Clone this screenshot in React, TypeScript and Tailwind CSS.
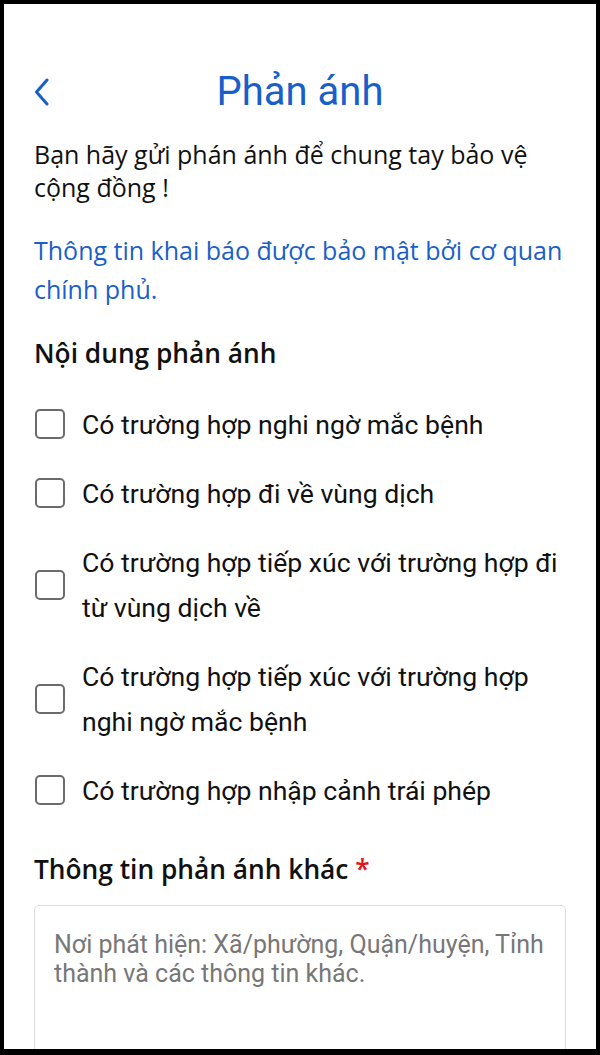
import React from "react";

const items = [
  "Có trường hợp nghi ngờ mắc bệnh",
  "Có trường hợp đi về vùng dịch",
  "Có trường hợp tiếp xúc với trường hợp đi từ vùng dịch về",
  "Có trường hợp tiếp xúc với trường hợp nghi ngờ mắc bệnh",
  "Có trường hợp nhập cảnh trái phép",
];

export default function App() {
  return (
    <div className="w-[600px] h-[1055px] bg-black pt-[4px] pl-[4px] pr-[4px] pb-[6px]">
      <div className="w-full h-full bg-white overflow-hidden flex flex-col">
        {/* Header */}
        <div className="mt-[68px] h-[56px] px-[30px] grid grid-cols-[1fr_auto_1fr] items-center">
          <div className="flex items-center">
            <svg width="16" height="28" viewBox="0 0 16 28" fill="none">
              <path d="M13 2 L2.5 14 L13 26" stroke="#1a5fc9" strokeWidth="3" strokeLinecap="round" strokeLinejoin="round" />
            </svg>
          </div>
          <div className="text-[40px] leading-none text-[#1a5fc9] font-['Roboto',sans-serif]">Phản ánh</div>
          <div />
        </div>

        <div className="px-[30px] flex flex-col font-['Open_Sans',sans-serif]">
          <p className="mt-[26px] text-[25px] leading-[33px] text-[#111]">
            Bạn hãy gửi phán ánh để chung tay bảo vệ cộng đồng !
          </p>
          <p className="mt-[27px] text-[25px] leading-[39px] text-[#1a5fc9]">
            Thông tin khai báo được bảo mật bởi cơ quan chính phủ.
          </p>
          <h2 className="mt-[27px] text-[26.3px] leading-[34px] font-semibold text-[#111]">Nội dung phản ánh</h2>

          <div className="mt-[31.5px] flex flex-col gap-[24px]">
            {items.map((t) => (
              <label key={t} className="flex items-center gap-[17px]">
                <span className="shrink-0 ml-[1px] w-[30px] h-[30px] rounded-[5px] border-2 border-[#6b6b6b]" />
                <span className="text-[26.6px] leading-[45px] text-[#111] font-['Roboto',sans-serif]">{t}</span>
              </label>
            ))}
          </div>

          <h2 className="mt-[39.5px] text-[26.3px] leading-[34px] font-semibold text-[#111]">
            Thông tin phản ánh khác <span className="text-[#e3141b]">*</span>
          </h2>

          <div className="mt-[19px] h-[200px] border border-[#dcdcdc] rounded-[5px] pt-[24px] pl-[19px] pr-[16px]">
            <div className="text-[25px] leading-[29px] text-[#777] font-['Roboto',sans-serif]">
              Nơi phát hiện: Xã/phường, Quận/huyện, Tỉnh thành và các thông tin khác.
            </div>
          </div>
        </div>
      </div>
    </div>
  );
}
